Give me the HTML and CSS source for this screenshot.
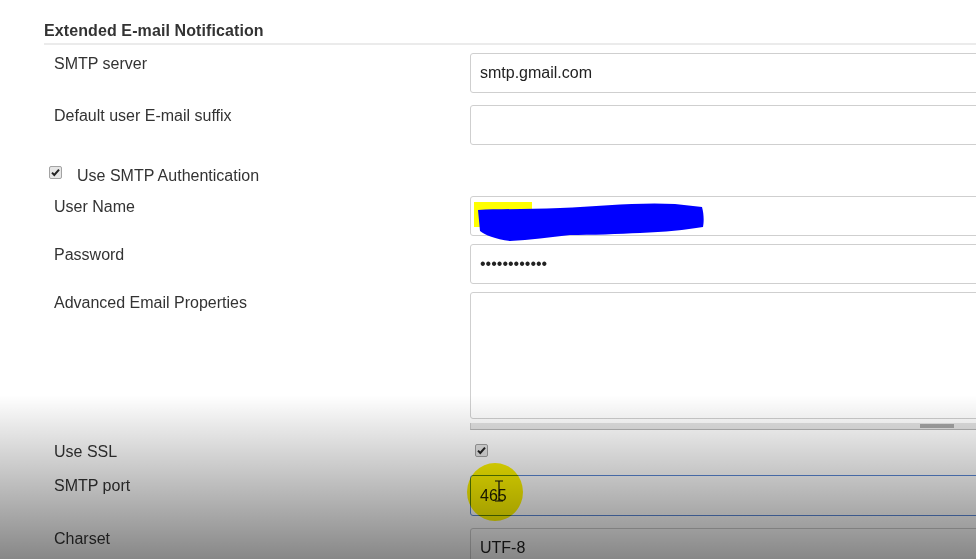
FILE: index.html
```html
<!DOCTYPE html>
<html lang="en">
<head>
    <meta charset="UTF-8">
    <title>Extended E-mail Notification</title>
    <link rel="stylesheet" href="styles.css">
</head>
<body>
    <div class="page">
        <!-- Section header -->
        <h2 class="section-title">Extended E-mail Notification</h2>

        <!-- Config rows -->
        <div class="rows">
            <div class="row row-gap-12">
                <div class="row-label">SMTP server</div>
                <div class="row-field"><input class="text-input" type="text" value="smtp.gmail.com"></div>
            </div>
            <div class="row row-gap-21">
                <div class="row-label">Default user E-mail suffix</div>
                <div class="row-field"><input class="text-input" type="text" value=""></div>
            </div>
            <div class="check-row row-gap-11">
                <span class="check-box"><svg width="11" height="11" viewBox="0 0 11 11"><path d="M2 5.6 L4.3 8 L9 2.6" fill="none" stroke="#222" stroke-width="2"/></svg></span>
                <span class="check-label">Use SMTP Authentication</span>
            </div>
            <div class="row row-gap-8">
                <div class="row-label">User Name</div>
                <div class="row-field">
                    <input class="text-input" type="text" value="">
                    <!-- redaction marks drawn over the field -->
                    <svg class="redact" width="260" height="50" viewBox="0 0 260 50">
                        <rect x="4" y="6" width="58" height="25" fill="#ffff00"/>
                        <path d="M8,14 C30,13 60,13 90,12 C130,10 170,6 205,8 L232,11 C234,18 234,26 233,31 C215,34 195,36 170,37 C150,38 120,39 100,39 C80,41 60,44 40,45 C25,43 15,39 10,35 Z" fill="#0000ff"/>
                    </svg>
                </div>
            </div>
            <div class="row row-gap-8">
                <div class="row-label">Password</div>
                <div class="row-field"><input class="text-input" type="password" value="abcdefghijkl"></div>
            </div>
            <div class="row row-gap-11">
                <div class="row-label">Advanced Email Properties</div>
                <div class="row-field">
                    <textarea class="text-area"></textarea>
                    <div class="h-scroll"><div class="h-scroll-thumb"></div></div>
                </div>
            </div>
            <div class="row row-gap-14">
                <div class="row-label">Use SSL</div>
                <div class="row-field">
                    <span class="check-box check-box-field"><svg width="11" height="11" viewBox="0 0 11 11"><path d="M2 5.6 L4.3 8 L9 2.6" fill="none" stroke="#222" stroke-width="2"/></svg></span>
                </div>
            </div>
            <div class="row row-gap-12">
                <div class="row-label">SMTP port</div>
                <div class="row-field">
                    <input class="text-input text-input-focus" type="text" value="465">
                    <div class="click-spot"></div>
                    <svg class="ibeam" width="10" height="22" viewBox="0 0 10 22">
                        <path d="M1 1 H9 M5 1 V21 M1 21 H9" fill="none" stroke="#111" stroke-width="1.2"/>
                    </svg>
                </div>
            </div>
            <div class="row">
                <div class="row-label">Charset</div>
                <div class="row-field"><input class="text-input" type="text" value="UTF-8"></div>
            </div>
        </div>

        <!-- video player shading at the bottom -->
        <div class="video-shade"></div>
    </div>
</body>
</html>
```

FILE: styles.css
```css
html, body {
    margin: 0;
    padding: 0;
}
body {
    font-family: "Liberation Sans", Arial, sans-serif;
    background-color: #fff;
    color: #333;
    overflow: hidden;
}
.page {
    position: relative;
    width: 976px;
    height: 559px;
    overflow: hidden;
}
/* Section header */
.section-title {
    margin: 0 0 8px 44px;
    padding-top: 22px;
    padding-bottom: 3px;
    font-size: 16px;
    line-height: 18px;
    font-weight: bold;
    letter-spacing: 0.1px;
    border-bottom: 2px solid #ebebeb;
}
/* Rows */
.rows {
    padding-left: 54px;
    width: 1000px;
}
.row {
    display: grid;
    grid-template-columns: 416px 1fr;
    align-items: start;
}
.row-gap-8 { margin-bottom: 8px; }
.row-gap-11 { margin-bottom: 11px; }
.row-gap-12 { margin-bottom: 12px; }
.row-gap-14 { margin-bottom: 14px; }
.row-gap-21 { margin-bottom: 21px; }
.row-label {
    font-size: 16px;
    line-height: 18px;
    padding-top: 2px;
}
.row-field {
    position: relative;
}
.text-input {
    box-sizing: border-box;
    display: block;
    width: 100%;
    height: 40px;
    margin: 0;
    padding: 0 9px;
    border: 1px solid #cfcfcf;
    border-radius: 3px;
    font-family: "Liberation Sans", Arial, sans-serif;
    font-size: 16px;
    color: #222;
    background-color: #fff;
    outline: none;
}
.text-input-focus {
    border-color: #5b88d6;
    height: 41px;
}
.text-area {
    box-sizing: border-box;
    display: block;
    width: 100%;
    height: 127px;
    margin: 0;
    border: 1px solid #cfcfcf;
    border-radius: 3px;
    resize: none;
    background-color: #fff;
}
.h-scroll {
    position: relative;
    margin-top: 4px;
    height: 6px;
    background-color: #e4e4e4;
    border-bottom: 1px solid #b5b5b5;
    border-left: 1px solid #c8c8c8;
}
.h-scroll-thumb {
    position: absolute;
    left: 449px;
    top: 1px;
    width: 34px;
    height: 4px;
    background-color: #a4a4a4;
}
/* Checkboxes */
.check-row {
    display: flex;
    align-items: flex-start;
    margin-left: -5px;
}
.check-box {
    box-sizing: border-box;
    display: flex;
    align-items: center;
    justify-content: center;
    width: 13px;
    height: 13px;
    border: 1px solid #a3a3a3;
    border-radius: 2px;
    background-color: #e6e6e6;
}
.check-label {
    margin-left: 15px;
    font-size: 16px;
    line-height: 18px;
    padding-top: 1px;
}
.check-box-field {
    margin: 3px 0 0 5px;
}
/* Overlays */
.redact {
    position: absolute;
    left: 0;
    top: 0;
    overflow: visible;
}
.click-spot {
    position: absolute;
    left: -3px;
    top: -12px;
    width: 56px;
    height: 58px;
    border-radius: 50%;
    background-color: #fff600;
    mix-blend-mode: multiply;
}
.ibeam {
    position: absolute;
    left: 24px;
    top: 5px;
}
.video-shade {
    position: absolute;
    left: 0;
    right: 0;
    top: 395px;
    bottom: 0;
    background: linear-gradient(to bottom, rgba(0, 0, 0, 0), rgba(0, 0, 0, 0.47));
    pointer-events: none;
}
```
